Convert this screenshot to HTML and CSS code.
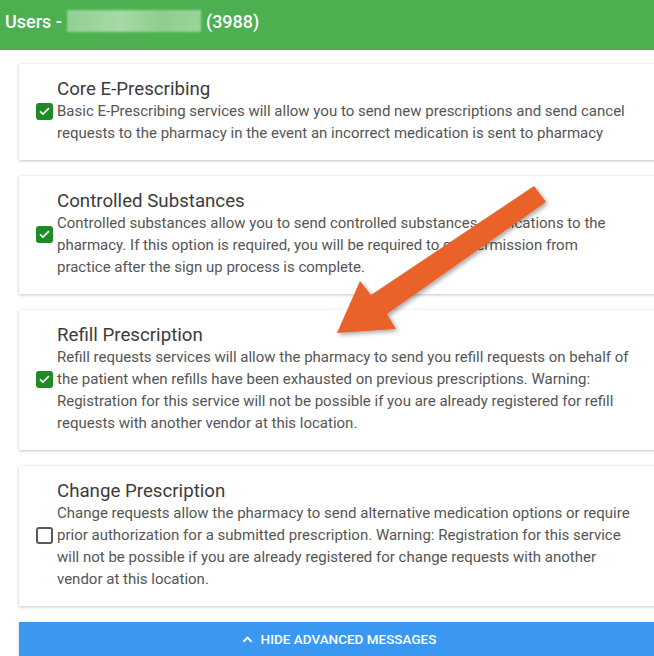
FILE: index.html
```html
<!DOCTYPE html>
<html lang="en">
<head>
    <meta charset="UTF-8">
    <meta name="viewport" content="width=device-width, initial-scale=1.0">
    <title>Users</title>
    <link rel="stylesheet" href="styles.css">
</head>
<body>
    <div class="header">
        <span>Users -</span>
        <span class="blurred"></span>
        <span>(3988)</span>
    </div>

    <div class="services">
        <div class="card">
            <span class="check checked">
                <svg viewBox="0 0 16 16" width="14" height="14"><path d="M2.5 8.5l3.5 3.3L13.5 4.5" fill="none" stroke="#fff" stroke-width="2"/></svg>
            </span>
            <div class="info">
                <h4>Core E-Prescribing</h4>
                <p>Basic E-Prescribing services will allow you to send new prescriptions and send cancel requests to the pharmacy in the event an incorrect medication is sent to pharmacy</p>
            </div>
        </div>

        <div class="card">
            <span class="check checked">
                <svg viewBox="0 0 16 16" width="14" height="14"><path d="M2.5 8.5l3.5 3.3L13.5 4.5" fill="none" stroke="#fff" stroke-width="2"/></svg>
            </span>
            <div class="info">
                <h4>Controlled Substances</h4>
                <p>Controlled substances allow you to send controlled substances medications to the pharmacy. If this option is required, you will be required to get permission from practice after the sign up process is complete.</p>
            </div>
        </div>

        <div class="card">
            <span class="check checked">
                <svg viewBox="0 0 16 16" width="14" height="14"><path d="M2.5 8.5l3.5 3.3L13.5 4.5" fill="none" stroke="#fff" stroke-width="2"/></svg>
            </span>
            <div class="info">
                <h4>Refill Prescription</h4>
                <p>Refill requests services will allow the pharmacy to send you refill requests on behalf of the patient when refills have been exhausted on previous prescriptions. Warning: Registration for this service will not be possible if you are already registered for refill requests with another vendor at this location.</p>
            </div>
        </div>

        <div class="card">
            <span class="check"></span>
            <div class="info">
                <h4>Change Prescription</h4>
                <p>Change requests allow the pharmacy to send alternative medication options or require prior authorization for a submitted prescription. Warning: Registration for this service will not be possible if you are already registered for change requests with another vendor at this location.</p>
            </div>
        </div>

        <button class="toggle">
            <svg viewBox="0 0 12 8" width="11" height="8"><path d="M1.5 7L6 2.5 10.5 7" fill="none" stroke="#fff" stroke-width="2.2"/></svg>
            HIDE ADVANCED MESSAGES
        </button>
    </div>

    <!-- annotation arrow -->
    <svg class="arrow" width="654" height="656" viewBox="0 0 654 656">
        <defs>
            <filter id="shadow" x="-20%" y="-20%" width="140%" height="140%">
                <feDropShadow dx="2" dy="2" stdDeviation="2" flood-color="#000" flood-opacity="0.35"/>
            </filter>
        </defs>
        <polygon filter="url(#shadow)" fill="#e8622a"
            points="534,186 546,202 387,314 396,329 337,333 360,281 371,295"/>
    </svg>
</body>
</html>
```

FILE: styles.css
```css
body {
    margin: 0;
    font-family: Roboto, "Noto Sans", Arial, sans-serif;
    background: #fff;
    overflow: hidden;
    width: 654px;
    height: 656px;
    position: relative;
}
.header {
    background-color: #4caf50;
    height: 50px;
    display: flex;
    align-items: center;
    gap: 5px;
    padding: 0 5px 8px;
    box-sizing: border-box;
    color: #fff;
    font-size: 18px;
    font-weight: 500;
}
.blurred {
    display: inline-block;
    width: 134px;
    height: 22px;
    background: linear-gradient(90deg, #93d093, #a6d9a6 40%, #8fce8f 70%, #9ad49a);
    filter: blur(1px);
}
.services {
    width: 640px;
    margin: 14px 0 0 19px;
    display: flex;
    flex-direction: column;
    gap: 16px;
}
.card {
    background: white;
    display: flex;
    align-items: center;
    gap: 4px;
    padding: 14px 27px 16px 17px;
    box-shadow: 0 1px 3px rgba(0, 0, 0, 0.22), 0 0 1px rgba(0, 0, 0, 0.08);
}
.check {
    flex: none;
    width: 17px;
    height: 17px;
    box-sizing: border-box;
    border: 2px solid #5a5a5a;
    border-radius: 3px;
    display: flex;
    align-items: center;
    justify-content: center;
}
.check.checked {
    background: #1f8b24;
    border-color: #1f8b24;
}
.info {
    width: 575px;
}
.info h4 {
    margin: 0;
    font-size: 18.7px;
    font-weight: 400;
    line-height: 22px;
    color: #3c3c3c;
}
.info p {
    margin: 0;
    font-size: 15px;
    line-height: 22px;
    color: #555;
}
.toggle {
    background-color: #3a98f0;
    border: none;
    color: white;
    height: 34px;
    font-family: inherit;
    font-size: 13.5px;
    font-weight: 500;
    display: flex;
    align-items: center;
    justify-content: center;
    gap: 8px;
    box-shadow: 0 1px 3px rgba(0, 0, 0, 0.2);
}
.arrow {
    position: absolute;
    left: 0;
    top: 0;
    pointer-events: none;
}
```
